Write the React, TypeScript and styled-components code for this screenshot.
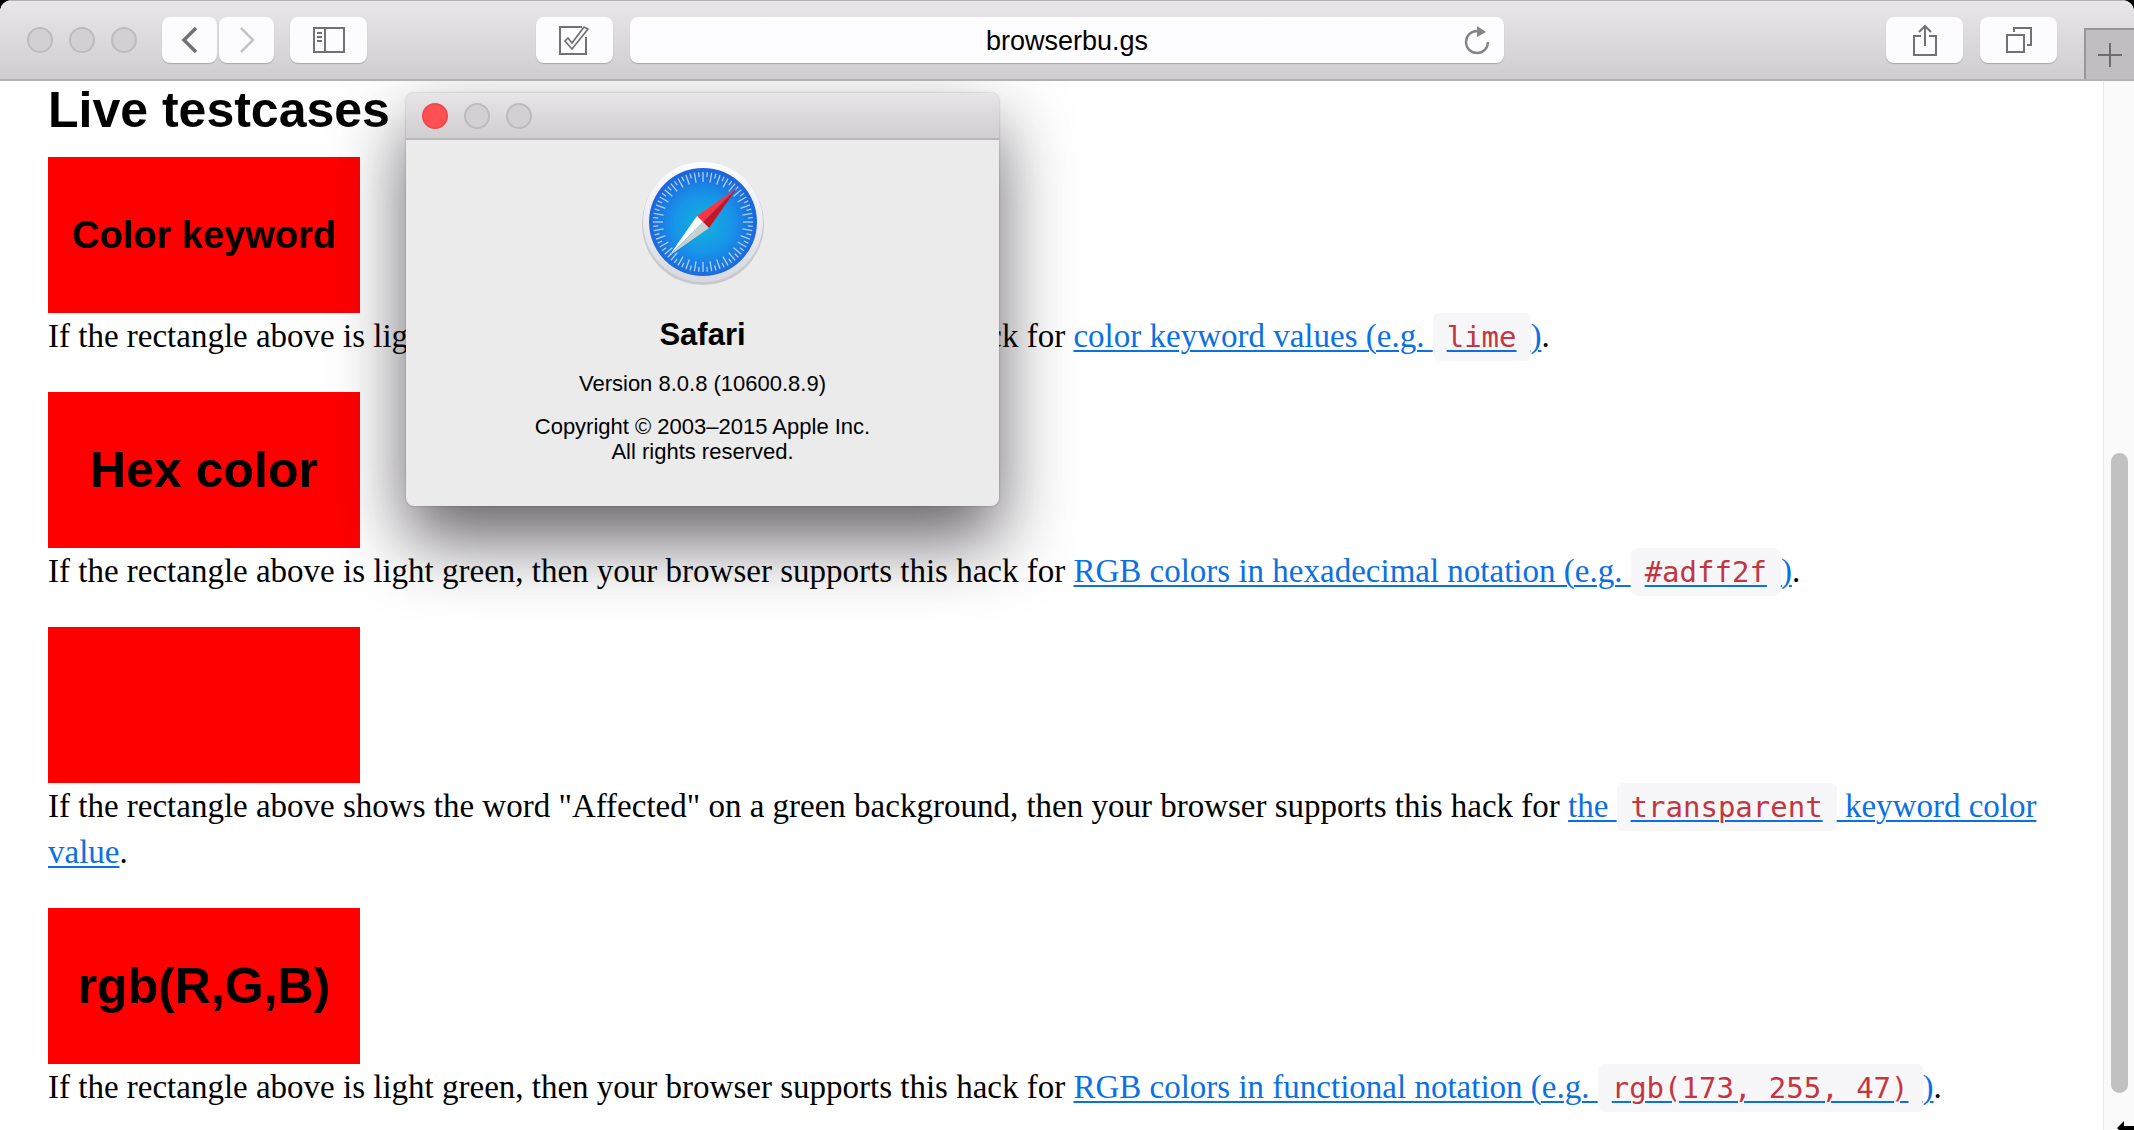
import React from "react";
import styled, { createGlobalStyle } from "styled-components";

const sans = `"Liberation Sans", Arial, Helvetica, sans-serif`;
const serif = `"Liberation Serif", "Times New Roman", serif`;
const mono = `"DejaVu Sans Mono", Menlo, monospace`;

const GlobalStyle = createGlobalStyle`
  *, *::before, *::after { box-sizing: border-box; }
  html { background: #000; }
  body { margin: 0; color: #000; font-family: ${serif}; }
  button, input { font: inherit; color: inherit; border: 0; margin: 0; padding: 0; }
  svg { display: block; }
`;

const Window = styled.div`
  display: flex;
  flex-direction: column;
  height: 100vh;
  overflow: hidden;
  border-radius: 12px 12px 0 0;
  background: #fff;
`;

const Toolbar = styled.header`
  position: relative;
  z-index: 2;
  flex: none;
  display: grid;
  grid-template-columns: 1fr 41% 1fr;
  align-items: center;
  column-gap: 17px;
  height: 81px;
  border-top: 1px solid #b3b1b3;
  border-bottom: 2px solid #b4b1b4;
  background: linear-gradient(#e8e6e9, #cfcdd0);
`;

const ToolGroup = styled.div`
  display: flex;
  align-items: center;
`;

const Leading = styled(ToolGroup)`
  gap: 16px;
  padding-left: 27px;
`;

const Trailing = styled(ToolGroup)`
  justify-content: flex-end;
  align-self: stretch;
  gap: 17px;
`;

const Lights = styled.div<{ $inset?: boolean }>`
  display: flex;
  gap: 16px;
  margin-right: ${(p) => (p.$inset ? "0" : "9px")};
`;

const Light = styled.button<{ $close?: boolean }>`
  width: 26px;
  height: 26px;
  border-radius: 50%;
  border: 2px solid ${(p) => (p.$close ? "#f2484b" : "#bdbbbe")};
  background: ${(p) => (p.$close ? "#ff5053" : "#d2d0d3")};
`;

const Pair = styled.div`
  display: flex;
  gap: 2px;
`;

const ToolButton = styled.button<{ $narrow?: boolean; $faded?: boolean }>`
  display: grid;
  place-items: center;
  width: ${(p) => (p.$narrow ? "55px" : "77px")};
  height: 46px;
  border-radius: 8px;
  background: #fcfbfd;
  box-shadow: 0 1px 1px #aaa8ab;
  color: ${(p) => (p.$faded ? "#c6c4c7" : "#727073")};
`;

const Compose = styled(ToolButton)`
  margin-left: auto;
`;

const AddressBar = styled.form`
  display: flex;
  height: 46px;
  border-radius: 8px;
  background: #fdfcfe;
  box-shadow: 0 1px 1px #aaa8ab;
`;

const Address = styled.input`
  flex: 1;
  min-width: 0;
  padding: 2px 0 0 54px;
  border-radius: 8px;
  background: transparent;
  font: 27px/44px ${sans};
  text-align: center;
  outline: none;
`;

const Reload = styled.button`
  display: grid;
  place-items: center;
  width: 54px;
  background: transparent;
  color: #858386;
`;

const NewTab = styled.button`
  align-self: flex-end;
  display: grid;
  place-items: center;
  width: 50px;
  height: 51px;
  margin-left: 10px;
  border: 2px solid #98969a;
  border-width: 2px 0 0 2px;
  background: #c0bec1;
  color: #6d6b6e;
`;

const Viewport = styled.div`
  position: relative;
  flex: 1;
  display: flex;
  min-height: 0;
`;

const Content = styled.main`
  flex: 1;
  min-width: 0;
  padding: 0 48px;
`;

const Heading = styled.h2`
  margin: 0 0 18px;
  font: bold 50px/58px ${sans};
`;

const Case = styled.section`
  margin-bottom: 33px;
`;

const Swatch = styled.div<{ $size: number }>`
  display: grid;
  place-items: center;
  width: 312px;
  height: 156px;
  background: #f00;
  font: bold ${(p) => p.$size}px/58px ${sans};
`;

const Description = styled.p`
  margin: 0;
  font-size: 33px;
  line-height: 46px;
`;

const Link = styled.a`
  color: #0b70e4;
  text-decoration: underline;
  text-decoration-thickness: 2px;
  text-underline-offset: 3px;
`;

const Code = styled.code`
  padding: 7px 14px;
  border-radius: 6px;
  background: #f7f7f9;
  color: #c4363f;
  font: 29px/34px ${mono};
`;

const ScrollTrack = styled.div`
  flex: none;
  width: 31px;
  padding: 372px 6px 37px 7px;
  border-left: 1px solid #e8e8e8;
  background: #fafafa;
`;

const ScrollThumb = styled.div`
  height: 100%;
  border-radius: 9px;
  background: #c1c1c1;
`;

const Pointer = styled.svg`
  position: absolute;
  right: 0;
  bottom: 0;
`;

const AboutWindow = styled.aside`
  position: absolute;
  top: 12px;
  left: 406px;
  width: 593px;
  border-radius: 8px;
  background: #ebebeb;
  box-shadow: 0 0 2px rgba(0, 0, 0, 0.3), 0 34px 70px rgba(30, 24, 32, 0.68);
`;

const TitleBar = styled.div`
  display: flex;
  align-items: center;
  height: 47px;
  padding-left: 16px;
  border-bottom: 2px solid #b9b7ba;
  border-radius: 8px 8px 0 0;
  background: linear-gradient(#e7e5e7, #d0ced1);
`;

const AboutBody = styled.div`
  display: flex;
  flex-direction: column;
  align-items: center;
  padding: 20px 0 24px;
  font: 22px/25px ${sans};
  text-align: center;
`;

const AppName = styled.h1`
  margin: 31px 0 18px;
  font: bold 31px/36px ${sans};
`;

const AboutLine = styled.p`
  margin: 0 0 18px;
`;

const ticks = Array.from({ length: 72 }, (_, i) => i * 5);

const SafariLogo = () => (
  <svg width="126" height="126" viewBox="0 0 126 126" role="img" aria-label="Safari">
    <defs>
      <radialGradient id="dial" cx="50%" cy="52%" r="52%">
        <stop offset="0" stopColor="#12b3d6" />
        <stop offset="0.5" stopColor="#1796ea" />
        <stop offset="1" stopColor="#1f62da" />
      </radialGradient>
      <linearGradient id="bezel" x1="0" y1="0" x2="0" y2="1">
        <stop offset="0" stopColor="#fbfdff" />
        <stop offset="1" stopColor="#d7d9e2" />
      </linearGradient>
    </defs>
    <circle cx="63" cy="64" r="61" fill="#a8a8ac" opacity="0.5" />
    <circle cx="63" cy="62" r="60" fill="url(#bezel)" />
    <circle cx="63" cy="62" r="54" fill="url(#dial)" />
    {ticks.map((angle, i) => (
      <line
        key={angle}
        x1="63"
        x2="63"
        y1="12"
        y2={i % 2 ? 17 : 22}
        stroke="#a9d2fa"
        strokeWidth="1.3"
        transform={`rotate(${angle} 63 62)`}
      />
    ))}
    <path d="M97 28 57 56 63 62Z" fill="#ff3340" />
    <path d="M97 28 69 68 63 62Z" fill="#c91424" />
    <path d="M29 96 57 56 63 62Z" fill="#fff" />
    <path d="M29 96 69 68 63 62Z" fill="#cbd0d0" />
  </svg>
);

const Chevron = ({ forward }: { forward?: boolean }) => (
  <svg width="18" height="28" fill="none" stroke="currentColor" strokeWidth={forward ? 2.5 : 3.5}>
    <path d={forward ? "M3 2 15 14 3 26" : "M15 2 3 14 15 26"} />
  </svg>
);

const SidebarIcon = () => (
  <svg width="32" height="26" fill="none" stroke="currentColor" strokeWidth="2">
    <path d="M1 1H31V25H1ZM12 1V25M4 6H9M4 10H9M4 14H9" />
  </svg>
);

const ComposeIcon = () => (
  <svg width="34" height="32" fill="none" stroke="currentColor" strokeWidth="2">
    <path d="M25 3H3V30H29V13" />
    <path d="M8 17 11 14 15 19 27 3 31 5 15 25Z" strokeWidth="1.7" />
  </svg>
);

const ReloadIcon = () => (
  <svg width="28" height="30" fill="none" stroke="currentColor" strokeWidth="2.4">
    <path d="M14 6A11 11 0 1 0 25 17" />
    <path d="M14 1V12L23 7Z" fill="currentColor" stroke="none" />
  </svg>
);

const ShareIcon = () => (
  <svg width="26" height="34" fill="none" stroke="currentColor" strokeWidth="2">
    <path d="M9 13H2V32H24V13H17M13 23V3M7 9 13 3 19 9" />
  </svg>
);

const TabsIcon = () => (
  <svg width="28" height="28" fill="none" stroke="currentColor" strokeWidth="2">
    <path d="M2 9H19V26H2ZM9 6V2H26V19H22" />
  </svg>
);

const PlusIcon = () => (
  <svg width="24" height="24" stroke="currentColor" strokeWidth="2">
    <path d="M12 0V24M0 12H24" />
  </svg>
);

const intro = "If the rectangle above is light green, then your browser supports this hack for ";

export default function App() {
  return (
    <>
      <GlobalStyle />
      <Window>
        <Toolbar>
          <Leading>
            <Lights>
              <Light aria-label="Close" />
              <Light aria-label="Minimize" />
              <Light aria-label="Zoom" />
            </Lights>
            <Pair>
              <ToolButton $narrow aria-label="Back"><Chevron /></ToolButton>
              <ToolButton $narrow $faded aria-label="Forward"><Chevron forward /></ToolButton>
            </Pair>
            <ToolButton aria-label="Show sidebar"><SidebarIcon /></ToolButton>
            <Compose aria-label="Edit"><ComposeIcon /></Compose>
          </Leading>
          <AddressBar onSubmit={(e) => e.preventDefault()}>
            <Address aria-label="Address" defaultValue="browserbu.gs" />
            <Reload type="button" aria-label="Reload"><ReloadIcon /></Reload>
          </AddressBar>
          <Trailing>
            <ToolButton aria-label="Share"><ShareIcon /></ToolButton>
            <ToolButton aria-label="Show all tabs"><TabsIcon /></ToolButton>
            <NewTab aria-label="New tab"><PlusIcon /></NewTab>
          </Trailing>
        </Toolbar>

        <Viewport>
          <Content>
            <Heading>Live testcases</Heading>
            <Case>
              <Swatch $size={38}>Color keyword</Swatch>
              <Description>
                {intro}
                <Link href="#keyword">color keyword values (e.g. <Code>lime</Code>)</Link>.
              </Description>
            </Case>
            <Case>
              <Swatch $size={50}>Hex color</Swatch>
              <Description>
                {intro}
                <Link href="#hex">RGB colors in hexadecimal notation (e.g. <Code>#adff2f</Code>)</Link>.
              </Description>
            </Case>
            <Case>
              <Swatch $size={50} />
              <Description>
                If the rectangle above shows the word "Affected" on a green background, then your
                browser supports this hack for{" "}
                <Link href="#transparent">the <Code>transparent</Code> keyword color value</Link>.
              </Description>
            </Case>
            <Case>
              <Swatch $size={50}>rgb(R,G,B)</Swatch>
              <Description>
                {intro}
                <Link href="#rgb">RGB colors in functional notation (e.g. <Code>rgb(173, 255, 47)</Code>)</Link>.
              </Description>
            </Case>
          </Content>
          <ScrollTrack>
            <ScrollThumb />
          </ScrollTrack>

          <AboutWindow aria-label="About Safari">
            <TitleBar>
              <Lights $inset>
                <Light $close aria-label="Close" />
                <Light aria-label="Minimize" />
                <Light aria-label="Zoom" />
              </Lights>
            </TitleBar>
            <AboutBody>
              <SafariLogo />
              <AppName>Safari</AppName>
              <AboutLine>Version 8.0.8 (10600.8.9)</AboutLine>
              <AboutLine>
                Copyright © 2003–2015 Apple Inc.
                <br />
                All rights reserved.
              </AboutLine>
            </AboutBody>
          </AboutWindow>

          <Pointer width="18" height="9" aria-hidden="true">
            <path d="M1 7 8 0V5H18V9H3Z" fill="#000" />
          </Pointer>
        </Viewport>
      </Window>
    </>
  );
}
